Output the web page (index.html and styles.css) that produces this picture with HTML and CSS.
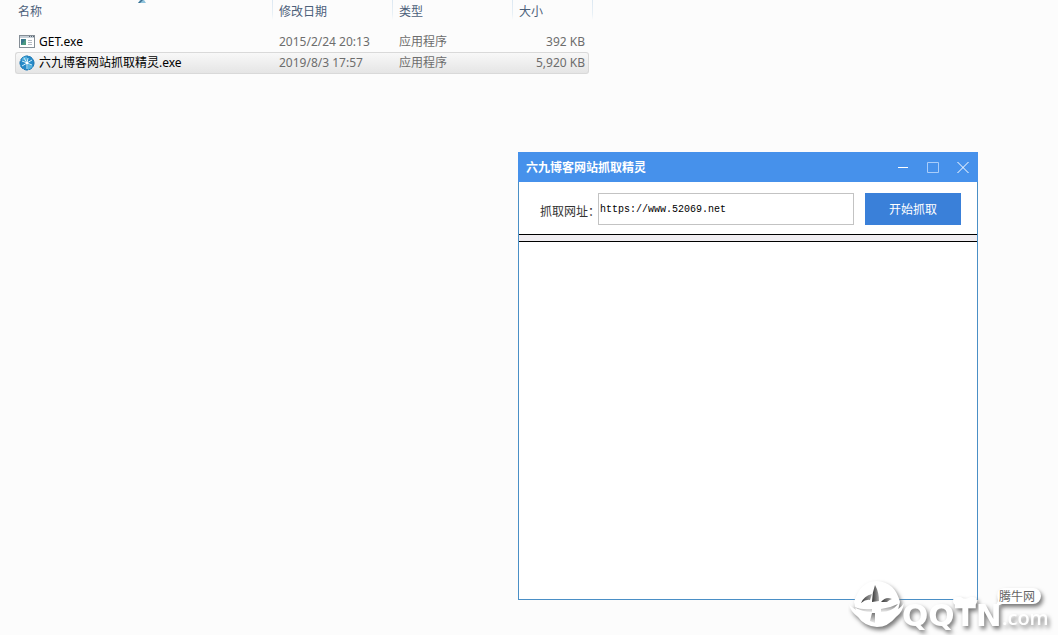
FILE: index.html
```html
<!DOCTYPE html>
<html lang="zh-CN">
<head>
<meta charset="utf-8">
<title>六九博客网站抓取精灵</title>
<link rel="stylesheet" href="styles.css">
</head>
<body>
<main class="desktop">
  <table class="files">
    <thead>
      <tr>
        <th class="col-name" scope="col">名称
          <svg class="sort" width="8" height="4" viewBox="0 0 8 4" aria-hidden="true"><path d="M2 0h4l2 3H0z" fill="#8fc3dc"/><path d="M3 0L0 3h2l3-3z" fill="#3b6f8f"/></svg>
        </th>
        <th class="col-date" scope="col">修改日期</th>
        <th class="col-type" scope="col">类型</th>
        <th class="col-size" scope="col">大小</th>
      </tr>
    </thead>
    <tbody>
      <tr>
        <td class="name"><span class="file">
          <svg width="16" height="14" viewBox="0 0 16 14" aria-hidden="true">
            <rect x=".5" y=".5" width="15" height="12" fill="#fff" stroke="#858e96"/>
            <path d="M1 1h14v2H1z" fill="#c5ced6"/><path d="M10 1h1v1h-1zM12 1h1v1h-1zM14 1h1v1h-1z" fill="#576470"/>
            <path d="M2 4h5v6H2z" fill="#39768c"/><path d="M2 10l5-6v6z" fill="#4c9a80"/>
            <path d="M9 5.500h4M9 7.500h4M9 9.500h4" stroke="#b4bac2"/>
          </svg>GET.exe</span></td>
        <td>2015/2/24 20:13</td>
        <td>应用程序</td>
        <td class="size">392 KB</td>
      </tr>
      <tr class="selected">
        <td class="name"><span class="file">
          <svg width="16" height="16" viewBox="0 0 16 16" aria-hidden="true">
            <circle cx="8" cy="8" r="7.200" fill="#268ac8"/>
            <path d="M2 4a7 7 0 0 1 6-3v6zM9 9l5 2a7 7 0 0 1-5 4z" fill="#55b3e0"/>
            <path d="M8 8L9 3M8 8l5-3M8 8l5 2M8 8v6M8 8l-5 3M8 8L3 6M8 8L5 3" stroke="#d4edf8"/>
            <circle cx="8" cy="8" r="1.200" fill="#fff"/>
            <circle cx="8" cy="8" r="7" fill="none" stroke="#2478b2" stroke-dasharray="4 1"/>
          </svg>六九博客网站抓取精灵.exe</span></td>
        <td>2019/8/3 17:57</td>
        <td>应用程序</td>
        <td class="size">5,920 KB</td>
      </tr>
    </tbody>
  </table>

  <section class="window">
    <header class="titlebar">
      <h1 class="title">六九博客网站抓取精灵</h1>
      <button class="control" type="button" aria-label="最小化"><svg width="12" height="12" viewBox="0 0 12 12"><path d="M1 6.500h10" stroke="#fff"/></svg></button>
      <button class="control" type="button" aria-label="最大化"><svg width="12" height="12" viewBox="0 0 12 12"><path d="M.5 1.500h11v10H.5z" fill="none" stroke="#a9cdfa"/></svg></button>
      <button class="control" type="button" aria-label="关闭"><svg width="12" height="12" viewBox="0 0 12 12"><path d="M.5 1l11 11M11.500 1l-11 11" stroke="#fff"/></svg></button>
    </header>
    <form class="toolbar">
      <label class="label" for="url">抓取网址：</label>
      <input class="url" id="url" type="text" value="https://www.52069.net" spellcheck="false">
      <button class="start" type="button">开始抓取</button>
    </form>
    <div class="divider"></div>
    <div class="output"></div>
  </section>

  <svg class="watermark" width="210" height="58" viewBox="0 0 210 58" role="img" aria-label="腾牛网 QQTN.com">
    <defs>
      <linearGradient id="blade" x1="0" y1="0" x2="1" y2="0"><stop offset="0" stop-color="#333"/><stop offset="1" stop-color="#aaa"/></linearGradient>
      <linearGradient id="fade" x1="0" y1="0" x2="0" y2="1"><stop offset="0" stop-color="#777"/><stop offset="1" stop-color="#eee"/></linearGradient>
    </defs>
    <g class="mark" fill="#fff">
      <path d="M6 25Q12 4 29 4Q47 5 52 25L50 33Q42 42 29 42Q14 41 8 34z"/>
      <path d="M1 27Q9 37 29 38Q49 37 56 26Q55 35 48 40Q40 50 29 50Q16 49 10 40Q2 34 1 27z"/>
    </g>
    <path d="M27 8Q24 16 24 25L31 24Q31 15 27 8z" fill="url(#blade)"/>
    <path d="M24 17Q16 19 13 26Q18 22 22 23z" fill="url(#blade)"/>
    <path d="M33 25Q38 19 44 22Q41 23 39 25z" fill="url(#blade)"/>
    <path d="M6 30Q14 35 24 35V32Q14 33 6 30zM33 32Q42 31 50 27Q44 35 33 35z" fill="url(#fade)"/>
    <path d="M24 36h3v10l-5-2z" fill="url(#fade)"/>
    <g class="mark" fill="#fff">
      <path d="M109 20h4q4 3 9 0h3a4 4 0 0 1 0 8h-16a4 4 0 0 1 0-8z"/>
      <path d="M156 11h29a8 8 0 0 1 0 16h-31l-7 3 3-6q-3-12 6-13z"/>
      <text class="brand" x="54" y="49">QQTN</text>
      <text class="domain" x="154" y="48">.com</text>
    </g>
    <text class="badge" x="151" y="24">腾牛网</text>
  </svg>
</main>
</body>
</html>
```
FILE: styles.css
```css
* { box-sizing: border-box; }

body {
  margin: 0;
  background: #fcfcfc;
  font: 12px/20px "Noto Sans", "Noto Sans CJK SC", sans-serif;
}

.desktop {
  position: relative;
  min-height: 100vh;
  overflow: hidden;
}

.files {
  width: 574px;
  margin-left: 15px;
  border-spacing: 0;
  table-layout: fixed;
  color: #6d6d6d;
}

.files th {
  position: relative;
  height: 31px;
  padding: 2px 6px 0;
  vertical-align: top;
  text-align: left;
  font-weight: 400;
  color: #4c607a;
}

.files th:first-child { padding-left: 3px; }

.files th::after {
  content: "";
  position: absolute;
  top: 0;
  right: 0;
  width: 1px;
  height: 20px;
  background: linear-gradient(#dce8f2, #e8f0f6 70%, #fcfcfc);
}

.files th:last-child::after { right: -4px; }

.col-name { width: 258px; }
.col-date, .col-type { width: 120px; }
.col-size { width: 76px; }

.sort {
  position: absolute;
  top: 0;
  left: 123px;
}

.files td {
  height: 21px;
  padding: 0 6px;
  line-height: 20px;
}

.files .name { padding-left: 4px; color: #000; }
.files .size { padding-right: 4px; text-align: right; }

.file {
  display: flex;
  align-items: center;
  gap: 4px;
}

.selected td {
  height: 22px;
  border: solid #d9d9d9;
  border-width: 1px 0;
  background: linear-gradient(#f8f8f8, #e5e5e5);
}

.files .selected td:first-child {
  padding-left: 3px;
  border-left-width: 1px;
  border-radius: 3px 0 0 3px;
}

.files .selected td:last-child {
  padding-right: 3px;
  border-right-width: 1px;
  border-radius: 0 3px 3px 0;
}

.window {
  position: absolute;
  top: 152px;
  left: 518px;
  display: flex;
  flex-direction: column;
  width: 460px;
  height: 448px;
  border: 1px solid #4a8fc6;
  border-top-color: #4691eb;
  background: #fff;
}

.titlebar {
  display: flex;
  align-items: center;
  height: 30px;
  margin: -1px -1px 0;
  padding: 0 0 0 8px;
  background: #4691eb;
}

.title {
  flex: 1;
  margin: 0;
  padding-top: 2px;
  font-size: 12px;
  font-weight: 700;
  color: #fff;
}

.control {
  display: grid;
  place-items: center;
  width: 30px;
  height: 30px;
  padding: 0;
  border: 0;
  background: none;
}

.toolbar {
  display: flex;
  align-items: center;
  height: 52px;
  padding: 2px 16px 0 21px;
}

.label {
  width: 58px;
  padding-top: 6px;
  white-space: nowrap;
  color: #333;
}

.url {
  flex: 1;
  min-width: 0;
  height: 32px;
  padding: 0 1px;
  border: 1px solid #c3c3c3;
  background: #fff;
  font: 10px "Liberation Mono", monospace;
  color: #000;
  outline: 0;
}

.start {
  width: 96px;
  height: 32px;
  margin-left: 11px;
  padding: 2px 0 0;
  border: 0;
  background: #3a80d9;
  font: inherit;
  color: #fff;
}

.divider {
  height: 8px;
  border: solid #000;
  border-width: 1px 0;
  background: #f0edf1;
}

.output { flex: 1; }

.watermark {
  position: absolute;
  right: 0;
  bottom: 0;
}

.mark { filter: drop-shadow(2px 3px 2px #777); }

.brand {
  font: 700 31px "DejaVu Sans", sans-serif;
}

.domain {
  font: 600 20px "Open Sans", sans-serif;
}

.badge {
  font: 12px "Noto Sans CJK SC", sans-serif;
  fill: #666;
}
```
